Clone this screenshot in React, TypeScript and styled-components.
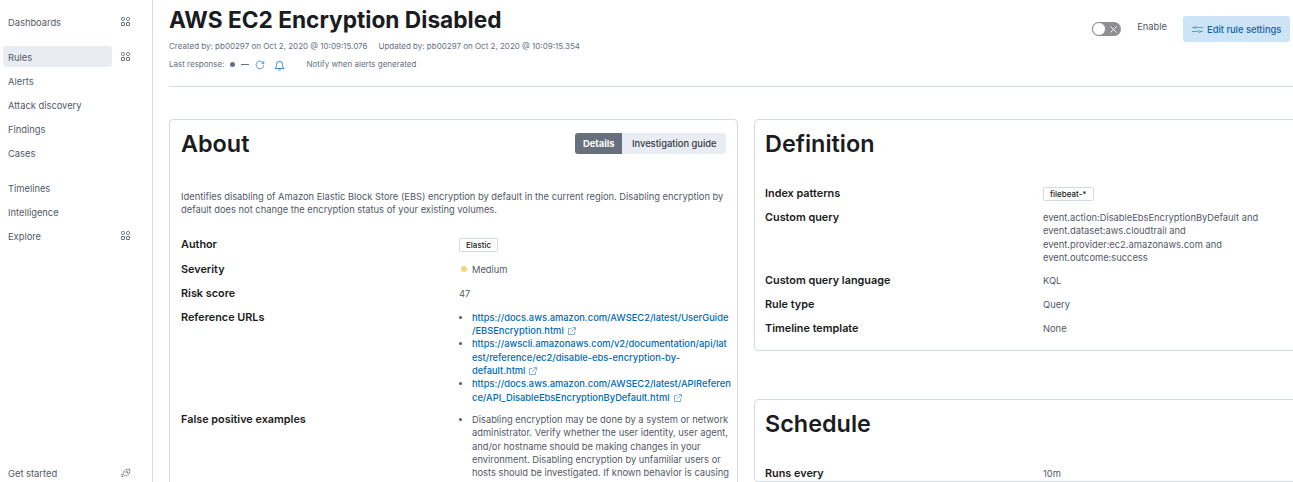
import React from "react";
import styled, { createGlobalStyle } from "styled-components";

const Global = createGlobalStyle`
  html, body { margin: 0; padding: 0; height: 482px; overflow: hidden; background: #fff; }
  body { font-family: Inter, "Liberation Sans", sans-serif; color: #343741; }
  #root { height: 482px; }
`;
const Page = styled.div`display: flex; height: 482px; width: 1293px; overflow: hidden;`;
const Side = styled.nav`
  width: 153px; flex: none; box-sizing: border-box; border-right: 1px solid #d3dae6;
  display: flex; flex-direction: column; padding: 10px 0 0 3px; height: 485px;
`;
const NavGroup = styled.div<{ $gap: number }>`margin-bottom: ${(p) => p.$gap}px;`;
const NavRow = styled.div`display: flex; align-items: flex-start; height: 24px; width: 127px;`;
const NavLabel = styled.div<{ $active?: boolean }>`
  flex: none; width: 109px; height: 21px; margin-top: 1px; display: flex; align-items: center; padding: 1px 0 0 5px; box-sizing: border-box;
  border-radius: 3px; font-size: 9.33px; color: #535966;
  background: ${(p) => (p.$active ? "#e9edf3" : "transparent")};
`;
const NavIcon = styled.span`margin: 7px 0 0 9px; display: flex; color: #5a606b;`;
const SideSpacer = styled.div`flex: 1;`;
const Main = styled.main`flex: none; width: 1140px; padding-left: 16px; box-sizing: border-box;`;
const Header = styled.header`
  height: 87px; box-sizing: border-box; border-bottom: 1px solid #d3dae6; width: 1124px; display: flex; justify-content: space-between;
`;
const Title = styled.h1`margin: 5px 0 0; font-size: 22.7px; line-height: 30px; font-weight: 700; color: #1a1c21;`;
const Meta = styled.div`font-size: 8px; line-height: 11px; color: #69707d; margin-top: 6px; display: flex; gap: 11px;`;
const Resp = styled.div`font-size: 8px; line-height: 11px; color: #69707d; margin-top: 6.500px; display: flex; align-items: center;`;
const Dot = styled.span`width: 5px; height: 5px; border-radius: 50%; background: #69707d; margin: 0 6px 0 6px;`;
const Dash = styled.span`width: 8px; height: 1px; background: #69707d; margin-right: 6px;`;
const Bell = styled.svg`margin-left: 9px;`;
const Notify = styled.span`margin-left: 21px;`;
const Actions = styled.div`display: flex; align-items: flex-start; margin-right: 3px; padding-top: 16px;`;
const Switch = styled.div`
  width: 29px; height: 14px; border-radius: 7px; background: #8f8f91; position: relative; margin-top: 6px; margin-right: 16px;
`;
const Thumb = styled.span`position: absolute; left: 0; top: 0; width: 14px; height: 14px; box-sizing: border-box; border-radius: 50%; background: #fff; border: 1px solid #8f8f91;`;
const SwitchX = styled.svg`position: absolute; left: 18px; top: 3.500px;`;
const EnableLabel = styled.span`font-size: 9.33px; line-height: 11px; color: #535966; margin-top: 5px; margin-right: 16px;`;
const EditBtn = styled.button`
  width: 107px; height: 26px; border: 0; border-radius: 3px; background: #cce4f5; color: #0b64a5; font: 500 9.33px Inter, sans-serif;
  display: flex; align-items: center; gap: 4px; padding: 0 0 0 9px; white-space: nowrap;
`;
const Columns = styled.div`display: flex; gap: 16px; margin-top: 32px; align-items: flex-start;`;
const Card = styled.section<{ $left: number }>`
  width: 569px; flex: none; box-sizing: border-box; border: 1px solid #d3dae6; border-radius: 4px; padding: 0 11px 0 ${(p) => p.$left}px;
`;
const RightCol = styled.div`display: flex; flex-direction: column; gap: 48px;`;
const CardHead = styled.div`display: flex; justify-content: space-between; align-items: center; height: 47px;`;
const CardTitle = styled.h2`margin: 0; font-size: 23.4px; line-height: 30px; font-weight: 600; color: #1a1c21;`;
const Tabs = styled.div`display: flex; height: 21px; margin-top: -1px; border-radius: 3px; overflow: hidden;`;
const Tab = styled.div<{ $on?: boolean }>`
  font-size: 9.33px; display: flex; align-items: center; padding: 0 ${(p) => (p.$on ? "8px" : "9.5px")}; font-weight: ${(p) => (p.$on ? 700 : 500)};
  background: ${(p) => (p.$on ? "#69707d" : "#e9edf3")}; color: ${(p) => (p.$on ? "#fff" : "#343741")};
`;
const Desc = styled.p`margin: 23px 0 0; font-size: 9.33px; line-height: 13.33px; color: #535966; height: 26px;`;
const Grid = styled.dl<{ $top: number; $first: number }>`
  margin: ${(p) => p.$top}px 0 0; display: grid; grid-template-columns: ${(p) => p.$first}px 1fr; row-gap: 10.67px;
`;
const Term = styled.dt`font-size: 10.85px; line-height: 13.33px; font-weight: 600; color: #1a1c21;`;
const Val = styled.dd<{ $pull?: number }>`
  margin: 0 0 ${(p) => -(p.$pull ?? 0)}px; font-size: 9.33px; line-height: 13.33px; color: #535966; min-width: 0;
`;
const Badge = styled.span<{ $tight?: boolean }>`
  display: inline-block; box-sizing: border-box; height: 14px; line-height: 12px; padding: 0 6px; border: 1px solid #d3dae6; border-radius: 2px;
  font-size: 8px; font-weight: 500; color: #1a1c21; background: #fff; vertical-align: top;
  margin-bottom: ${(p) => (p.$tight ? "-1px" : "0")};
`;
const SevDot = styled.span`display: inline-block; width: 6px; height: 6px; border-radius: 50%; background: #f1d86f; margin: 0 5px 1px 2px;`;
const List = styled.ul`margin: 0; padding: 0 0 0 13px; width: 260px;`;
const LinkItem = styled.li`white-space: nowrap;`;
const Link = styled.a`color: #006bb4; font-weight: 500;`;
const Ext = styled.svg`margin-left: 4px; vertical-align: -1px;`;
const Spacer = styled.div`height: 15px;`;

const AppsIcon = () => (
  <svg width="9" height="9" viewBox="0 0 9 9" fill="none" stroke="currentColor" strokeWidth="0.9">
    <rect x="0.5" y="0.5" width="3" height="3" rx="1.2" /><rect x="5.5" y="0.5" width="3" height="3" rx="1.2" />
    <rect x="0.5" y="5.5" width="3" height="3" rx="0.5" /><rect x="5.5" y="5.5" width="3" height="3" rx="0.5" />
  </svg>
);
const ExtIcon = () => (
  <Ext width="8" height="8" viewBox="0 0 8 8" fill="none" stroke="#5f9fd0" strokeWidth="0.8">
    <path d="M6.500 4.500v3h-6v-6h3M4.500.5h3v3M7.300.7 3.200 4.800" />
  </Ext>
);

const nav1 = ["Alerts", "Attack discovery", "Findings", "Cases"];
const nav2 = ["Timelines", "Intelligence"];

export default function App() {
  return (
    <Page>
      <Global />
      <Side>
        <NavGroup $gap={11}>
          <NavRow><NavLabel>Dashboards</NavLabel><NavIcon><AppsIcon /></NavIcon></NavRow>
        </NavGroup>
        <NavGroup $gap={11}>
          <NavRow><NavLabel $active>Rules</NavLabel><NavIcon><AppsIcon /></NavIcon></NavRow>
          {nav1.map((n) => <NavRow key={n}><NavLabel>{n}</NavLabel></NavRow>)}
        </NavGroup>
        <NavGroup $gap={0}>
          {nav2.map((n) => <NavRow key={n}><NavLabel>{n}</NavLabel></NavRow>)}
          <NavRow><NavLabel>Explore</NavLabel><NavIcon><AppsIcon /></NavIcon></NavRow>
        </NavGroup>
        <SideSpacer />
        <NavRow>
          <NavLabel>Get started</NavLabel>
          <NavIcon>
            <svg width="10" height="10" viewBox="0 0 10 10" fill="none" stroke="currentColor" strokeWidth="0.9" strokeDasharray="1.6 .5">
              <path d="M8.800 1.200C6.500 1 4.300 1.800 3 3.200 1.900 4.400 1.900 6.300 2.900 7.200s2.800.9 4-.2C8.300 5.700 9 3.500 8.800 1.200Z" /><circle cx="5.800" cy="4.200" r=".9" /><path d="M1 6 .6 8.200 3 9" />
            </svg>
          </NavIcon>
        </NavRow>
      </Side>
      <Main>
        <Header>
          <div>
            <Title>AWS EC2 Encryption Disabled</Title>
            <Meta><span>Created by: pb00297 on Oct 2, 2020 @ 10:09:15.076</span><span>Updated by: pb00297 on Oct 2, 2020 @ 10:09:15.354</span></Meta>
            <Resp>
              Last response:<Dot /><Dash />
              <svg width="10" height="10" viewBox="0 0 10 10" fill="none" stroke="#4d93c6" strokeWidth="0.9"><path d="M8.800 5a3.800 3.800 0 1 1-1.100-2.700L8.800 3.400V1M8.800 3.400H6.500" /></svg>
              <Bell width="11" height="12" viewBox="0 0 11 12" fill="none" stroke="#2f7fb8" strokeWidth="0.9"><path d="M1 9.500c.9-.9 1.500-1.700 1.500-4.200a3 3 0 0 1 6 0c0 2.500.6 3.300 1.500 4.200ZM4.200 11h2.600" /></Bell>
              <Notify>Notify when alerts generated</Notify>
            </Resp>
          </div>
          <Actions>
            <Switch><Thumb />
              <SwitchX width="7" height="7" viewBox="0 0 7 7" stroke="#fff" strokeWidth="0.9"><path d="M.5.5l6 6M6.500.5l-6 6" /></SwitchX>
            </Switch>
            <EnableLabel>Enable</EnableLabel>
            <EditBtn>
              <svg width="11" height="9" viewBox="0 0 11 9" fill="none" stroke="#3f86bb" strokeWidth="0.75"><path d="M0 2.500h2.500M4.500 2.500H11M0 6.500h6.500M8.500 6.500H11" /><circle cx="3.500" cy="2.500" r="1" /><circle cx="7.500" cy="6.500" r="1" /></svg>
              Edit rule settings
            </EditBtn>
          </Actions>
        </Header>
        <Columns>
          <Card $left={11}>
            <CardHead>
              <CardTitle>About</CardTitle>
              <Tabs><Tab $on>Details</Tab><Tab>Investigation guide</Tab></Tabs>
            </CardHead>
            <Desc>Identifies disabling of Amazon Elastic Block Store (EBS) encryption by default in the current region. Disabling encryption by default does not change the encryption status of your existing volumes.</Desc>
            <Grid $top={22} $first={278}>
              <Term>Author</Term><Val><Badge>Elastic</Badge></Val>
              <Term>Severity</Term><Val><SevDot />Medium</Val>
              <Term>Risk score</Term><Val>47</Val>
              <Term>Reference URLs</Term>
              <Val $pull={1.5}>
                <List>
                  <LinkItem><Link>https://docs.aws.amazon.com/AWSEC2/latest/UserGuide<br />/EBSEncryption.html</Link><ExtIcon /></LinkItem>
                  <LinkItem><Link>https://awscli.amazonaws.com/v2/documentation/api/lat<br />est/reference/ec2/disable-ebs-encryption-by-<br />default.html</Link><ExtIcon /></LinkItem>
                  <LinkItem><Link>https://docs.aws.amazon.com/AWSEC2/latest/APIReferen<br />ce/API_DisableEbsEncryptionByDefault.html</Link><ExtIcon /></LinkItem>
                </List>
              </Val>
              <Term>False positive examples</Term>
              <Val>
                <List>
                  <li>Disabling encryption may be done by a system or network administrator. Verify whether the user identity, user agent, and/or hostname should be making changes in your environment. Disabling encryption by unfamiliar users or hosts should be investigated. If known behavior is causing false positives, it can be exempted from the rule.</li>
                </List>
              </Val>
            </Grid>
          </Card>
          <RightCol>
            <Card $left={10}>
              <CardHead><CardTitle>Definition</CardTitle></CardHead>
              <Grid $top={20} $first={278}>
                <Term>Index patterns</Term><Val><Badge $tight>filebeat-*</Badge></Val>
                <Term>Custom query</Term>
                <Val $pull={1}>event.action:DisableEbsEncryptionByDefault and<br />event.dataset:aws.cloudtrail and<br />event.provider:ec2.amazonaws.com and<br />event.outcome:success</Val>
                <Term>Custom query language</Term><Val>KQL</Val>
                <Term>Rule type</Term><Val>Query</Val>
                <Term>Timeline template</Term><Val>None</Val>
              </Grid>
              <Spacer />
            </Card>
            <Card $left={10}>
              <CardHead><CardTitle>Schedule</CardTitle></CardHead>
              <Grid $top={20} $first={278}>
                <Term>Runs every</Term><Val>10m</Val>
              </Grid>
            </Card>
          </RightCol>
        </Columns>
      </Main>
    </Page>
  );
}
